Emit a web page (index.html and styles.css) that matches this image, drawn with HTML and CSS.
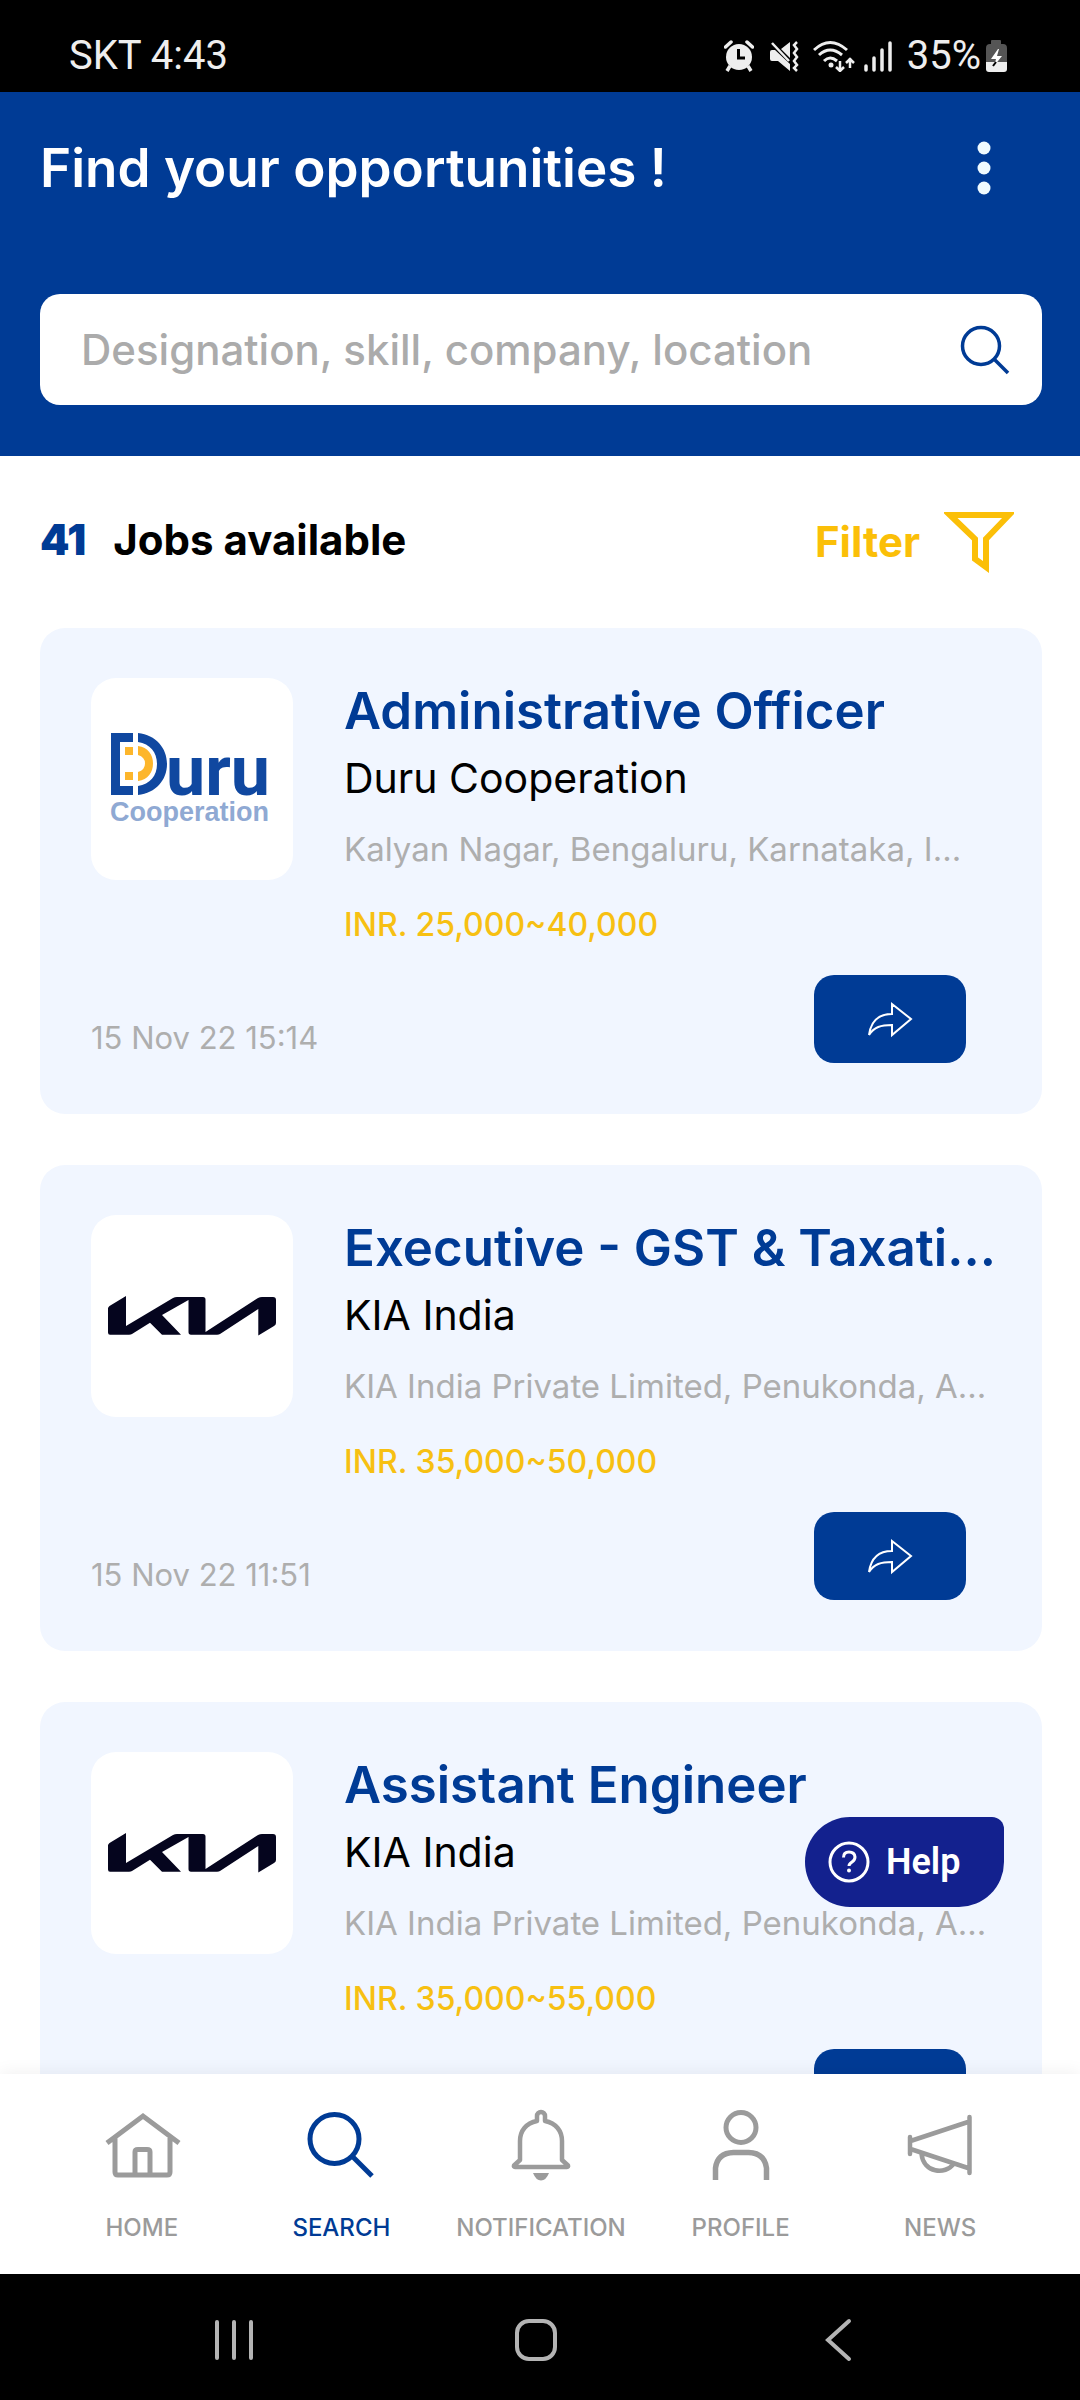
FILE: index.html
```html
<!DOCTYPE html>
<html lang="en">
<head>
<meta charset="utf-8">
<meta name="viewport" content="width=device-width, initial-scale=1">
<title>Find your opportunities</title>
<link rel="stylesheet" href="styles.css">
</head>
<body>
<svg class="sprite" aria-hidden="true">
  <symbol id="share" viewBox="0 0 48 38"><path d="M3 35C5 21 12 14 26 14V4L45 19L26 35V25C15 25 8 27 3 35Z" fill="none" stroke="#fff" stroke-width="2"/></symbol>
  <symbol id="kia" viewBox="0 0 202 202"><path d="M17 93.500Q17 92 18.500 91L35 81V111L82 83Q84 82 86 82H112Q114.500 82 114.500 84.500V117L167 83Q169 82 171 82H182Q185 82 185 85V108Q185 110 183 111L167.300 120.500V94L129 119Q128 119.700 126 119.700H100Q97.500 119.700 97.500 117V85L71 100L90 119.700H71L59 107.700L41 119Q40 119.700 38 119.700H19Q17 119.700 17 117.500Z" fill="#05051e"/></symbol>
</svg>

<div class="statusbar">
  <span>SKT 4:43</span>
  <div class="status-icons">
    <svg width="30" height="32" viewBox="0 0 30 32"><circle cx="15" cy="17" r="13" fill="#eee"/><path d="M1.500 7L7 2M28.500 7L23 2" stroke="#eee" stroke-width="3.500" stroke-linecap="round"/><path d="M6 26L3 31M24 26L27 31" stroke="#eee" stroke-width="3.500"/><path d="M14.500 9V18H21" stroke="#000" stroke-width="3" fill="none"/></svg>
    <svg class="icon-mute" width="30" height="32" viewBox="0 0 30 32"><path d="M1 12Q1 10 3 10H6L21 24V31L9 21H3Q1 21 1 19ZM12 9L21 2V18Z" fill="#eee"/><path d="M3 3L20 21" stroke="#eee" stroke-width="2.500"/><path d="M28 2L25 5L28 9L25 13L28 17L25 21L28 25L25 28L28 31" stroke="#eee" stroke-width="2.500" fill="none"/></svg>
    <svg class="icon-wifi" width="42" height="32" viewBox="0 0 42 32"><g stroke="#eee" stroke-width="3" fill="none"><path d="M1 10Q17 -5 34 10M6 15Q17 5 29 15M11 21Q17 15 24 21"/><path d="M27 21V31M23 27L27 31L31 27M37 28V18M33 23L37 19L41 23" stroke-width="2.500"/></g><circle cx="18" cy="25" r="2.500" fill="#eee"/></svg>
    <svg class="icon-signal" width="30" height="32" viewBox="0 0 30 32"><path d="M3 26V30M11 18V30M19 10V30M27 3V30" stroke="#eee" stroke-width="3.500" stroke-linecap="round"/></svg>
    <span>35%</span>
    <svg class="icon-battery" width="22" height="34" viewBox="0 0 22 34"><path d="M6 2Q6 1 7 1H15Q16 1 16 2V5H18Q22 5 22 9V23H1V9Q1 5 5 5H6Z" fill="#555"/><path d="M1 23H22V30Q22 33 19 33H4Q1 33 1 30Z" fill="#eee"/><path d="M13 10L6 20H11L9 27L17 17H12L14 10Z" fill="#fff"/><path d="M11 23L8 27" stroke="#000" stroke-width="2"/></svg>
  </div>
</div>

<header class="header">
  <div class="title-row">
    <h1>Find your opportunities !</h1>
    <button class="more" aria-label="More options"><svg width="14" height="54" viewBox="0 0 14 54"><g fill="#f0fbff"><circle cx="7" cy="7" r="6.500"/><circle cx="7" cy="27" r="6.500"/><circle cx="7" cy="47" r="6.500"/></g></svg></button>
  </div>
  <form class="search">
    <input type="search" aria-label="Search jobs" placeholder="Designation, skill, company, location">
    <button type="button" aria-label="Search"><svg width="50" height="50" viewBox="0 0 50 50"><g fill="none" stroke="#003b95" stroke-width="3.500"><circle cx="21" cy="21" r="18.500"/><path d="M34 34L48 48"/></g></svg></button>
  </form>
</header>

<main class="main">
  <div class="toolbar">
    <p class="count"><b>41</b><span>Jobs available</span></p>
    <button class="filter">Filter<svg width="70" height="64" viewBox="0 0 70 64"><path d="M6 5H65L42 29V57L31 49V29Z" fill="none" stroke="#fbbf08" stroke-width="6"/></svg></button>
  </div>

  <div class="jobs">
    <article class="job">
      <div class="job-top">
        <div class="logo"><svg viewBox="0 0 202 202" role="img" aria-label="Duru Cooperation">
          <path d="M20 55H42V64H29V108H42V117H20Z" fill="#1048a0"/>
          <path d="M47 55C65 57 76 70 76 86S65 115 47 117V108C59 106 66 98 66 86S59 66 47 64Z" fill="#1048a0"/>
          <path d="M34 69H42V77H34ZM34 94H42V102H34ZM47 68C57 69 62 77 62 85.500S57 102 47 103V94Q54 92 54 85.500T47 77Z" fill="#fdb62b"/>
          <text class="duru" x="75" y="117">uru</text>
          <text class="duru-sub" x="19" y="143">Cooperation</text>
        </svg></div>
        <div class="info">
          <h2>Administrative Officer</h2>
          <p class="company">Duru Cooperation</p>
          <p class="place">Kalyan Nagar, Bengaluru, Karnataka, I…</p>
          <p class="pay">INR. 25,000~40,000</p>
        </div>
      </div>
      <div class="job-foot">
        <time>15 Nov 22 15:14</time>
        <button class="share" aria-label="Share"><svg width="48" height="38"><use href="#share"/></svg></button>
      </div>
    </article>

    <article class="job">
      <div class="job-top">
        <div class="logo"><svg viewBox="0 0 202 202" role="img" aria-label="KIA"><use href="#kia"/></svg></div>
        <div class="info">
          <h2>Executive - GST &amp; Taxati…</h2>
          <p class="company">KIA India</p>
          <p class="place">KIA India Private Limited, Penukonda, A…</p>
          <p class="pay">INR. 35,000~50,000</p>
        </div>
      </div>
      <div class="job-foot">
        <time>15 Nov 22 11:51</time>
        <button class="share" aria-label="Share"><svg width="48" height="38"><use href="#share"/></svg></button>
      </div>
    </article>

    <article class="job">
      <div class="job-top">
        <div class="logo"><svg viewBox="0 0 202 202" role="img" aria-label="KIA"><use href="#kia"/></svg></div>
        <div class="info">
          <h2>Assistant Engineer</h2>
          <p class="company">KIA India</p>
          <p class="place">KIA India Private Limited, Penukonda, A…</p>
          <p class="pay">INR. 35,000~55,000</p>
        </div>
      </div>
      <div class="job-foot">
        <time></time>
        <button class="share" aria-label="Share"><svg width="48" height="38"><use href="#share"/></svg></button>
      </div>
    </article>
  </div>

  <button class="help"><svg width="42" height="42" viewBox="0 0 42 42"><g fill="none" stroke="#fff"><circle cx="21" cy="21" r="19" stroke-width="3"/><path d="M15.500 16.500Q15.500 11 21 11T27 16Q27 19 24 21T21 25" stroke-width="3"/></g><circle cx="21" cy="29.500" r="2" fill="#fff"/></svg>Help</button>
</main>

<nav class="tabs" aria-label="Main">
  <a href="#home"><svg width="80" height="80" viewBox="0 0 80 80"><path d="M5 38L41 11L77 38M13 33V67Q13 70 16 70H65Q68 70 68 67V33M33 70V47Q33 44.500 36 44.500H45Q48 44.500 48 47V70"/></svg>HOME</a>
  <a href="#search" class="active" aria-current="page"><svg width="80" height="80" viewBox="0 0 80 80"><circle cx="33.500" cy="34" r="24.500"/><path d="M51 51L71 71"/></svg>SEARCH</a>
  <a href="#notification"><svg width="80" height="80" viewBox="0 0 80 80"><path d="M36 16V11A4 4 0 0 1 44 11V16C55 18 61 26 61 36V55L67 60.500Q67.500 62 66 62H14Q12.500 62 13 60.500L19 55V36C19 26 25 18 36 16Z" stroke-width="4.500" stroke-linejoin="round"/><path class="solid" d="M32 68H48Q45 75.500 40 75.500T32 68Z"/></svg>NOTIFICATION</a>
  <a href="#profile"><svg width="80" height="80" viewBox="0 0 80 80"><circle cx="40" cy="22.500" r="15"/><path d="M14.500 75V63Q16.500 48 32.500 47.500H47.500Q63.500 48 65.500 63V75" stroke-width="5.500"/></svg>PROFILE</a>
  <a href="#news"><svg width="80" height="80" viewBox="0 0 80 80"><path d="M10 32V49M69.500 12V68M10.500 36L69.500 16.500M10.500 44L69.500 63.500M21.500 49C23.500 68 45.500 70 53.500 59" stroke-width="4.500" stroke-linecap="round"/></svg>NEWS</a>
</nav>

<div class="sysbar">
  <button aria-label="Recents"><svg width="44" height="44" viewBox="0 0 44 44"><path d="M5 4V40M22 4V40M39 4V40"/></svg></button>
  <button aria-label="Home"><svg width="44" height="44" viewBox="0 0 44 44"><rect x="3" y="3" width="38" height="38" rx="12"/></svg></button>
  <button aria-label="Back"><svg width="44" height="44" viewBox="0 0 44 44"><path d="M33 3L12 22L33 41"/></svg></button>
</div>
</body>
</html>
```
FILE: styles.css
```css
* { box-sizing: border-box; }

body {
  margin: 0;
  height: 100vh;
  display: flex;
  flex-direction: column;
  background: #fff;
  color: #000;
  font-family: Inter, "Noto Sans", sans-serif;
}

h1, h2, p { margin: 0; }

button {
  margin: 0;
  padding: 0;
  border: 0;
  background: none;
  font: inherit;
  color: inherit;
}

svg { display: block; flex: none; }

.sprite { position: absolute; width: 0; height: 0; }

.statusbar {
  flex: none;
  display: flex;
  justify-content: space-between;
  align-items: center;
  height: 92px;
  padding: 20px 73px 0 69px;
  background: #000;
  color: #eee;
  font: 400 40px/48px Roboto, sans-serif;
}

.status-icons { display: flex; align-items: center; }
.icon-mute { margin-left: 15px; }
.icon-wifi { margin-left: 14px; }
.icon-signal { margin: 0 14px 0 8px; }
.icon-battery { margin-left: 4px; }

.header {
  flex: none;
  padding: 0 38px 51px 40px;
  background: #003b95;
}

.title-row {
  display: flex;
  justify-content: space-between;
  align-items: center;
  height: 152px;
  padding-right: 51px;
  margin-bottom: 50px;
}

h1 {
  color: #fff;
  font-size: 53px;
  font-weight: 600;
  line-height: 68px;
}

.search {
  display: flex;
  align-items: center;
  height: 111px;
  padding: 0 32px 0 41px;
  border-radius: 20px;
  background: #fff;
}

.search input {
  flex: 1;
  min-width: 0;
  height: 68px;
  padding: 0;
  border: 0;
  outline: 0;
  background: none;
  font: 500 42px/68px Inter, sans-serif;
}

.search input::placeholder { color: #ababab; opacity: 1; }

.main {
  position: relative;
  flex: 1;
  min-height: 0;
  overflow: hidden;
}

.toolbar {
  display: flex;
  justify-content: space-between;
  align-items: center;
  height: 172px;
  padding: 0 66px 0 40px;
  font-size: 42px;
  font-weight: 700;
  line-height: 50px;
}

.count { display: flex; gap: 27px; padding-bottom: 4px; }
.count b { color: #003b95; }

.filter {
  display: flex;
  align-items: center;
  gap: 24px;
  color: #fbbf08;
}

.jobs {
  display: flex;
  flex-direction: column;
  gap: 51px;
  padding: 0 38px 51px 40px;
}

.job {
  padding: 50px 50px 51px 51px;
  border-radius: 25px;
  background: #f1f6ff;
}

.job-top { display: flex; gap: 51px; }

.logo {
  flex: none;
  width: 202px;
  height: 202px;
  border-radius: 25px;
  background: #fff;
}

.duru { font: 700 70px Roboto, sans-serif; fill: #1048a0; }
.duru-sub { font: 700 27px "Liberation Sans", sans-serif; fill: #8fa9d3; }

.info { flex: 1; min-width: 0; white-space: nowrap; }

h2 {
  color: #003b95;
  font-size: 51px;
  font-weight: 600;
  line-height: 66px;
}

.company { font-size: 41px; line-height: 68px; }
.place, time { color: #aeaeae; }
.place { font-size: 33px; line-height: 74px; }

.pay {
  color: #f7c012;
  font-size: 32px;
  font-weight: 500;
  line-height: 78px;
}

.job-foot {
  display: flex;
  justify-content: space-between;
  align-items: flex-end;
  margin-top: 11px;
  padding-right: 26px;
}

time { font-size: 31px; line-height: 50px; }

.share {
  display: grid;
  place-items: center;
  width: 152px;
  height: 88px;
  border-radius: 20px;
  background: #003b95;
}

.help {
  position: absolute;
  right: 76px;
  bottom: 167px;
  display: flex;
  align-items: center;
  gap: 16px;
  width: 199px;
  height: 90px;
  padding-left: 23px;
  border-radius: 45px 12px 45px 45px;
  background: #13218e;
  color: #fff;
  font: 600 36px/44px Roboto, sans-serif;
}

.tabs {
  position: relative;
  flex: none;
  display: grid;
  grid-template-columns: repeat(5, 1fr);
  height: 200px;
  padding: 31px 40px 0 42px;
  background: #fff;
  box-shadow: 0 -2px 16px rgba(0, 0, 0, 0.06);
}

.tabs a {
  display: flex;
  flex-direction: column;
  align-items: center;
  gap: 25px;
  color: #9b9b9b;
  font-size: 24px;
  font-weight: 500;
  line-height: 36px;
  text-decoration: none;
}

.tabs a.active { color: #003b95; }
.tabs svg { fill: none; stroke: currentColor; stroke-width: 5; }
.tabs .solid { fill: currentColor; stroke: none; }

.sysbar {
  flex: none;
  display: flex;
  justify-content: center;
  align-items: center;
  gap: 258px;
  height: 126px;
  padding: 6px 8px 0 0;
  background: #000;
}

.sysbar svg { fill: none; stroke: #b4b4b4; stroke-width: 4; stroke-linecap: round; }
```
